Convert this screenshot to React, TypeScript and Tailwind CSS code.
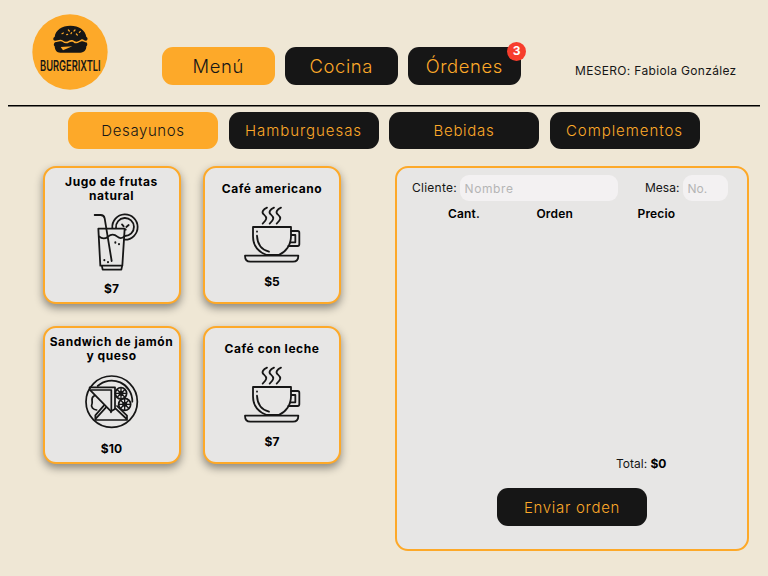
import React from "react";

function Logo() {
  return (
    <svg className="h-[76px] w-[76px] shrink-0 overflow-visible" viewBox="35 28 228 228">
      <circle cx="149" cy="142" r="113" fill="#fda929" />
      <path
        d="M104 108 C98 108 97 99 103 97 C105 76 125 63 150 63 C176 63 195 76 198 97 C203 99 203 107 197 108 C190 108 190 103 184 104 C178 106 175 112 168 111 C160 110 161 106 154 106 C146 106 145 111 137 111 C129 111 128 105 120 105 C113 105 112 108 104 108Z"
        fill="#161616"
      />
      <path
        d="M104 113 C112 113 113 110 120 110 C128 110 129 116 137 116 C145 116 146 111 154 111 C161 111 160 116 168 116 C175 116 178 111 184 110 C190 109 192 113 198 113 C202 117 202 122 198 125 C198 136 192 144 180 144 L120 144 C109 144 104 137 103 125 C99 122 100 117 104 113Z"
        fill="#161616"
      />
      <path d="M121 127 L156 125 L128 137Z" fill="#fda929" />
      <path
        d="M125 87l4-2M144 76l3 3M152 87l2-3M164 76l-3 3M168 88l3 3M180 80l-3 3M139 90l3-1"
        stroke="#fda929"
        strokeWidth="3.6"
        strokeLinecap="round"
      />
      <text
        x="59"
        y="199"
        fontSize="42"
        fontWeight="600"
        textLength="182"
        lengthAdjust="spacingAndGlyphs"
        fill="#161616"
        className="font-['Inter',sans-serif]"
      >
        BURGERIXTLI
      </text>
    </svg>
  );
}

const iconClass = "my-[9px] block h-[60px] w-[60px] shrink-0";

function JuiceIcon() {
  return (
    <svg className={iconClass} viewBox="141 156 180 180" fill="none" stroke="#161616" strokeWidth="5.4" strokeLinecap="round" strokeLinejoin="round">
      <path d="M190 206H269L262 317H196Z" />
      <path d="M201 319L203 329H259L261 319" />
      <path d="M179 165H197Q207 165 209 175L230 303" />
      <path d="M192 229C202 238 210 237 219 230C229 221 238 222 247 230C254 236 261 235 267 230" />
      <path d="M232 204A38 38 0 1 1 269 239" />
      <path d="M243 204A27 27 0 1 1 269 228" />
      <path d="M261 193L266 199M281 195L274 201M272 208V209" />
      <path d="M241 247V248M252 252V253M208 300V301M219 306V307" strokeWidth="6" />
    </svg>
  );
}

function CoffeeIcon() {
  return (
    <svg className={iconClass} viewBox="141 135 180 180" fill="none" stroke="#161616" strokeWidth="5.4" strokeLinecap="round" strokeLinejoin="round">
      <path d="M216 143C206 147 197 156 207 164C218 173 215 180 203 191" />
      <path d="M237 143C227 147 218 156 228 164C239 173 236 180 224 191" />
      <path d="M258 143C248 147 239 156 249 164C260 173 257 180 245 191" />
      <path d="M174 201H288V229C288 255 273 276 251 285H215C190 276 174 256 174 229Z" />
      <path d="M289 213H308Q313 213 313 218V253Q313 258 308 258H280" />
      <path d="M290 225H301V247H286" />
      <path d="M186 214V215M186 227C187 252 200 269 222 275" />
      <path d="M150 287H310C310 299 303 305 294 305H166C157 305 150 299 150 287Z" />
    </svg>
  );
}

function SandwichIcon() {
  return (
    <svg className={iconClass} viewBox="141 159 180 180" fill="none" stroke="#161616" strokeWidth="5.2" strokeLinecap="round" strokeLinejoin="round">
      <circle cx="230" cy="248" r="77" />
      <path d="M188 201A62 62 0 0 1 292 248" />
      <path d="M164 205H240V270L228 277L164 212Z" />
      <path d="M169 213H229V276" />
      <path d="M178 230C165 236 174 246 171 254C166 264 175 272 185 273" />
      <path d="M207 259L181 289V303H276V290L246 261M213 265L183 298M242 269L275 300M228 277V280" />
      <circle cx="258" cy="223" r="17" />
      <path d="M258 207V239M242 223H274M247 212L269 234M269 212L247 234" strokeWidth="4" />
      <circle cx="269" cy="256" r="18" />
      <path d="M269 239V273M252 256H286M257 244L281 268M281 244L257 268" strokeWidth="4" />
      <circle cx="258" cy="223" r="5" fill="#161616" />
      <circle cx="269" cy="256" r="5" fill="#161616" />
    </svg>
  );
}

function Card({ title, price, children }: { title: React.ReactNode; price: string; children: React.ReactNode }) {
  return (
    <button className="flex h-[138px] w-[138px] flex-col items-center justify-center rounded-[13px] border-2 border-[#fda929] bg-[#e7e6e5] text-[12px] leading-[14px] font-bold whitespace-nowrap text-black shadow-[0_4px_8px_rgba(0,0,0,0.42)]">
      <span className="block text-center tracking-[0.55px]">{title}</span>
      {children}
      <span className="block pt-px tracking-[0.1px]">{price}</span>
    </button>
  );
}

const base = "flex h-[37.5px] items-center justify-center rounded-[11px] pt-[2px] whitespace-nowrap";
const dark = "bg-[#161616] text-[#fda929]";
const light = "bg-[#fda929] text-[#161616]";

export default function App() {
  return (
    <div className="h-[576px] w-[768px] overflow-hidden bg-[#efe7d5] font-['Inter',sans-serif] text-[#161616]">
      <header className="mx-[8px] flex h-[106px] items-start border-b border-black pt-[14px] pl-[24px] shadow-[0_1px_0_#77736a]">
        <Logo />
        <nav className="mt-[33px] ml-[54px] flex gap-[10.5px] text-[18.4px] font-light">
          <button className={`${base} ${light} w-[112.5px] tracking-[0.7px]`}><span>Menú</span></button>
          <button className={`${base} ${dark} w-[112.5px] tracking-[0.6px]`}><span>Cocina</span></button>
          <button className={`${base} ${dark} relative w-[112.5px] tracking-[0.6px]`}>
            <span>Órdenes</span>
            <span className="absolute -top-[5.5px] -right-[5.5px] flex h-[19px] w-[19px] items-center justify-center rounded-full bg-[#f73d2c] text-[12px] font-bold tracking-normal text-white">3</span>
          </button>
        </nav>
        <p className="mt-[48px] ml-[54.5px] text-[12px] leading-[18px] tracking-[0.33px] whitespace-nowrap">MESERO: Fabiola González</p>
      </header>

      <nav className="mt-[5.5px] flex gap-[10.5px] pl-[68px] text-[15px] font-light">
        <button className={`${base} ${light} w-[150px] tracking-[0.6px]`}>Desayunos</button>
        <button className={`${base} ${dark} w-[150px] tracking-[0.95px]`}>Hamburguesas</button>
        <button className={`${base} ${dark} w-[150px] tracking-[0.7px]`}>Bebidas</button>
        <button className={`${base} ${dark} w-[150px] tracking-[0.95px]`}>Complementos</button>
      </nav>

      <main className="mt-[17px] flex items-start pl-[42.5px]">
        <section className="grid grid-cols-[138px_138px] gap-x-[22.5px] gap-y-[22px]">
          <Card title={<>Jugo de frutas<br />natural</>} price="$7"><JuiceIcon /></Card>
          <Card title="Café americano" price="$5"><CoffeeIcon /></Card>
          <Card title={<>Sandwich de jamón<br />y queso</>} price="$10"><SandwichIcon /></Card>
          <Card title="Café con leche" price="$7"><CoffeeIcon /></Card>
        </section>

        <section className="ml-[54px] flex h-[385px] w-[354px] flex-col rounded-[13px] border-2 border-[#fda929] bg-[#e7e6e5] text-[12px]">
          <div className="mt-[7px] flex h-[26px] items-center pl-[15px]">
            <label className="w-[48px] tracking-[0.25px] whitespace-nowrap">Cliente:</label>
            <input placeholder="Nombre" className="h-[26px] w-[158px] rounded-[9px] bg-[#f3f1f2] pl-[4.5px] tracking-[0.6px] outline-none placeholder:text-[#b5b5b5]" />
            <label className="ml-[27px] w-[38px] whitespace-nowrap">Mesa:</label>
            <input placeholder="No." className="h-[26px] w-[45px] rounded-[9px] bg-[#f3f1f2] pl-[4.5px] outline-none placeholder:text-[#b5b5b5]" />
          </div>
          <div className="mt-[4px] flex h-[18px] items-center pl-[51px] font-semibold tracking-[0.15px] text-black">
            <span className="w-[88.5px]">Cant.</span>
            <span className="w-[101px]">Orden</span>
            <span>Precio</span>
          </div>
          <p className="mt-[232px] pl-[219px] leading-[18px] whitespace-pre">Total: <b className="text-black">$0</b></p>
          <button className={`${base} ${dark} mt-[15px] ml-[100px] w-[150px] text-[15px] font-light tracking-[0.7px]`}>Enviar orden</button>
        </section>
      </main>
    </div>
  );
}
